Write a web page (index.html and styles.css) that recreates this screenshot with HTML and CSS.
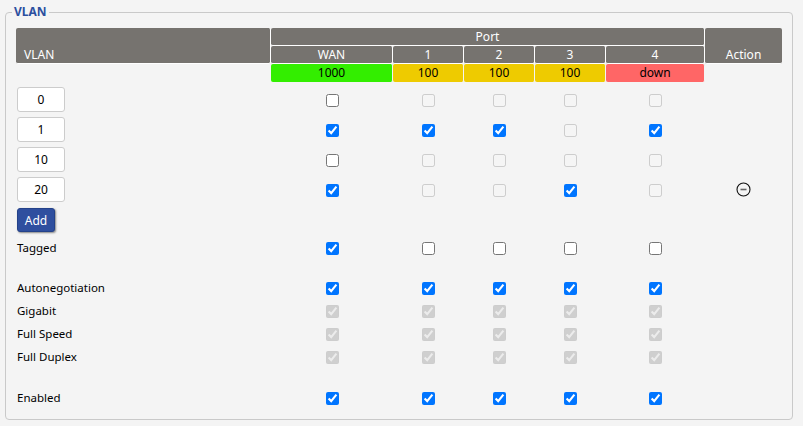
FILE: index.html
```html
<!DOCTYPE html>
<html lang="en">
<head>
<meta charset="utf-8">
<title>VLAN</title>
<link rel="stylesheet" href="styles.css">
</head>
<body>

<fieldset class="box">
<legend>VLAN</legend>
<table class="vlan">
	<colgroup>
		<col class="c-vlan"><col class="c-wan"><col class="c-port"><col class="c-port"><col class="c-port"><col class="c-p4"><col class="c-act">
	</colgroup>
	<thead>
		<tr class="hd1">
			<th rowspan="2" class="first">VLAN</th>
			<th colspan="5">Port</th>
			<th rowspan="2" class="last">Action</th>
		</tr>
		<tr class="hd2">
			<th>WAN</th><th>1</th><th>2</th><th>3</th><th>4</th>
		</tr>
		<tr class="status">
			<td></td>
			<td class="gig">1000</td>
			<td class="fast">100</td>
			<td class="fast">100</td>
			<td class="fast">100</td>
			<td class="down">down</td>
			<td class="none"></td>
		</tr>
	</thead>
	<tbody>
		<tr class="vrow top">
			<td class="name"><input class="vid" type="text" value="0"></td>
			<td><input type="checkbox"></td>
			<td><input type="checkbox" disabled></td>
			<td><input type="checkbox" disabled></td>
			<td><input type="checkbox" disabled></td>
			<td><input type="checkbox" disabled></td>
			<td></td>
		</tr>
		<tr class="vrow">
			<td class="name"><input class="vid" type="text" value="1"></td>
			<td><input type="checkbox" checked></td>
			<td><input type="checkbox" checked></td>
			<td><input type="checkbox" checked></td>
			<td><input type="checkbox" disabled></td>
			<td><input type="checkbox" checked></td>
			<td></td>
		</tr>
		<tr class="vrow">
			<td class="name"><input class="vid" type="text" value="10"></td>
			<td><input type="checkbox"></td>
			<td><input type="checkbox" disabled></td>
			<td><input type="checkbox" disabled></td>
			<td><input type="checkbox" disabled></td>
			<td><input type="checkbox" disabled></td>
			<td></td>
		</tr>
		<tr class="vrow">
			<td class="name"><input class="vid" type="text" value="20"></td>
			<td><input type="checkbox" checked></td>
			<td><input type="checkbox" disabled></td>
			<td><input type="checkbox" disabled></td>
			<td><input type="checkbox" checked></td>
			<td><input type="checkbox" disabled></td>
			<td>
				<svg class="del" width="15" height="15" viewBox="0 0 15 15">
					<circle cx="7.5" cy="7.5" r="6.5" fill="none" stroke="#111" stroke-width="1.1"/>
					<line x1="4.5" y1="7.5" x2="10.5" y2="7.5" stroke="#666" stroke-width="1.6"/>
				</svg>
			</td>
		</tr>
		<tr class="addrow">
			<td class="name"><button class="add" type="button">Add</button></td>
			<td colspan="6"></td>
		</tr>
		<tr class="opt">
			<td class="name">Tagged</td>
			<td><input type="checkbox" checked></td>
			<td><input type="checkbox"></td>
			<td><input type="checkbox"></td>
			<td><input type="checkbox"></td>
			<td><input type="checkbox"></td>
			<td></td>
		</tr>
		<tr class="gap"><td colspan="7"></td></tr>
		<tr class="opt">
			<td class="name">Autonegotiation</td>
			<td><input type="checkbox" checked></td>
			<td><input type="checkbox" checked></td>
			<td><input type="checkbox" checked></td>
			<td><input type="checkbox" checked></td>
			<td><input type="checkbox" checked></td>
			<td></td>
		</tr>
		<tr class="opt">
			<td class="name">Gigabit</td>
			<td><input type="checkbox" checked disabled></td>
			<td><input type="checkbox" checked disabled></td>
			<td><input type="checkbox" checked disabled></td>
			<td><input type="checkbox" checked disabled></td>
			<td><input type="checkbox" checked disabled></td>
			<td></td>
		</tr>
		<tr class="opt">
			<td class="name">Full Speed</td>
			<td><input type="checkbox" checked disabled></td>
			<td><input type="checkbox" checked disabled></td>
			<td><input type="checkbox" checked disabled></td>
			<td><input type="checkbox" checked disabled></td>
			<td><input type="checkbox" checked disabled></td>
			<td></td>
		</tr>
		<tr class="opt">
			<td class="name">Full Duplex</td>
			<td><input type="checkbox" checked disabled></td>
			<td><input type="checkbox" checked disabled></td>
			<td><input type="checkbox" checked disabled></td>
			<td><input type="checkbox" checked disabled></td>
			<td><input type="checkbox" checked disabled></td>
			<td></td>
		</tr>
		<tr class="gap last-gap"><td colspan="7"></td></tr>
		<tr class="opt">
			<td class="name">Enabled</td>
			<td><input type="checkbox" checked></td>
			<td><input type="checkbox" checked></td>
			<td><input type="checkbox" checked></td>
			<td><input type="checkbox" checked></td>
			<td><input type="checkbox" checked></td>
			<td></td>
		</tr>
	</tbody>
</table>
</fieldset>

</body>
</html>
```

FILE: styles.css
```css
body {
  margin: 0;
  padding: 5px 10px 0 5px;
  background-color: #f4f4f4;
  font-family: "Noto Sans", "DejaVu Sans", sans-serif;
  font-size: 11.5px;
  color: #000000;
}

/* outer frame */
.box {
  margin: 0;
  padding: 9px 10px 10px 10px;
  border: 1px solid #c9c9c9;
  border-radius: 4px;
}
.box legend {
  margin-left: -4px;
  padding: 0 2px;
  font-size: 12px;
  line-height: 14px;
  font-weight: bold;
  color: #2c4f9f;
}

/* table */
.vlan {
  width: 100%;
  table-layout: fixed;
  border-collapse: separate;
  border-spacing: 0;
}
.c-vlan { width: 255px; }
.c-wan { width: 122px; }
.c-port { width: 71px; }
.c-p4 { width: 99px; }
.c-act { width: 77px; }

.vlan th {
  height: 17px;
  padding: 0;
  background-color: #76736f;
  color: #ffffff;
  font-weight: normal;
  font-size: 12px;
  line-height: 17px;
  text-align: center;
  border-right: 1px solid #ffffff;
  border-bottom: 1px solid #ffffff;
  border-radius: 2px;
}
.vlan th.first {
  text-align: left;
  padding-left: 8px;
  vertical-align: bottom;
}
.vlan th.last {
  vertical-align: bottom;
  border-right: 0;
}

.status td {
  height: 18px;
  padding: 0;
  text-align: center;
  font-size: 12px;
  line-height: 18px;
  border-right: 1px solid #f4f4f4;
  border-radius: 2px;
}
.status .gig { background-color: #33ee00; }
.status .fast { background-color: #eecb00; }
.status .down { background-color: #ff6666; }

.vlan tbody td {
  padding: 0;
  text-align: center;
  vertical-align: middle;
}
.vlan tbody td.name {
  text-align: left;
  padding-left: 1px;
}

.vrow td { height: 30px; }
.vrow.top td { padding-top: 2px; }
.addrow td { height: 32px; }
.opt td { height: 23px; }
.gap td { height: 17px; }
.gap.last-gap td { height: 18px; }

.vlan input[type="checkbox"] {
  margin: 0;
  width: 13px;
  height: 13px;
  vertical-align: middle;
}

.vid {
  box-sizing: border-box;
  width: 48px;
  height: 25px;
  padding: 0;
  border: 1px solid #cccccc;
  border-radius: 3px;
  background-color: #ffffff;
  font-family: inherit;
  font-size: 12px;
  text-align: center;
  vertical-align: middle;
}

.add {
  box-sizing: border-box;
  width: 38px;
  height: 24px;
  padding: 0;
  border: 1px solid #24428a;
  border-radius: 3px;
  background-color: #2f4f9f;
  color: #ffffff;
  font-family: inherit;
  font-size: 12px;
  box-shadow: 1px 1px 2px rgba(0, 0, 0, 0.45);
  vertical-align: middle;
}

.del { vertical-align: middle; }
```
